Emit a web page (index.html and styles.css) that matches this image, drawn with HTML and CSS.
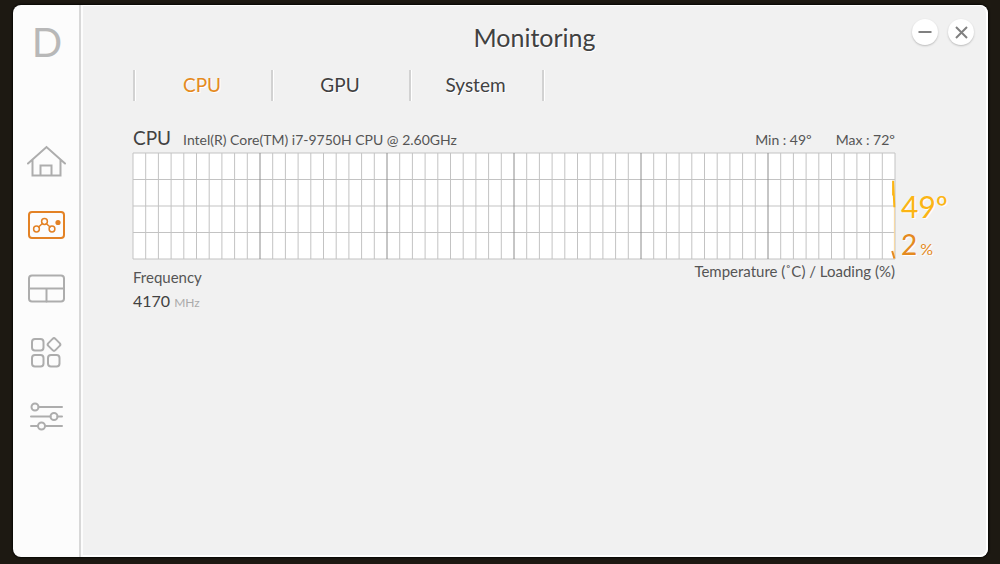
FILE: index.html
```html
<!DOCTYPE html>
<html lang="en">
<head>
<meta charset="utf-8">
<title>Monitoring</title>
<link rel="stylesheet" href="styles.css">
</head>
<body>
<div class="window">
  <nav class="sidebar" aria-label="Sections">
    <div class="logo">D</div>
    <button class="nav-button" type="button" aria-label="Home">
      <svg class="icon" viewBox="0 0 40 40"><path d="M2 22.5 20.500 6 39 22.500M6.500 19v15.500h28V19M14.500 34V24.500h11V34"/></svg>
    </button>
    <button class="nav-button active" type="button" aria-label="Monitoring" aria-current="page">
      <svg class="icon" viewBox="0 0 40 40"><rect x="3" y="7" width="35" height="26" rx="3"/><g class="fine"><circle cx="10.500" cy="24" r="2.900"/><circle cx="18.500" cy="16.500" r="2.900"/><circle cx="26" cy="24" r="2.900"/><path d="m12.600 22 3.800-3.500M20.400 18.700l3.700 3.300"/></g><circle class="dot" cx="32" cy="17.500" r="2.600"/></svg>
    </button>
    <button class="nav-button" type="button" aria-label="Layout">
      <svg class="icon" viewBox="0 0 40 40"><rect x="3" y="6.500" width="35" height="26" rx="3"/><path d="M3 19.500h35M20.500 19.500v13"/></svg>
    </button>
    <button class="nav-button" type="button" aria-label="Apps">
      <svg class="icon" viewBox="0 0 40 40"><rect x="6" y="6" width="11.500" height="11.500" rx="3"/><rect x="6" y="22" width="11.500" height="11.500" rx="3"/><rect x="22" y="22" width="11.500" height="11.500" rx="3"/><rect x="23" y="6.500" width="10" height="10" rx="2" transform="rotate(45 28 11.500)"/></svg>
    </button>
    <button class="nav-button" type="button" aria-label="Settings">
      <svg class="icon" viewBox="0 0 40 40"><path d="M12.500 10H36M5 19.500h19.500M31.500 19.500H36M5 29h7M19 29h17"/><circle cx="9" cy="10" r="3.500"/><circle cx="28" cy="19.500" r="3.500"/><circle cx="15.500" cy="29" r="3.500"/></svg>
    </button>
  </nav>
  <main class="main">
    <header class="titlebar">
      <h1 class="title">Monitoring</h1>
      <div class="controls">
        <button class="control" type="button" aria-label="Minimize"><svg viewBox="0 0 26 26"><path d="M6.500 13h13"/></svg></button>
        <button class="control" type="button" aria-label="Close"><svg viewBox="0 0 26 26"><path d="m8 8 11 11M19 8 8 19"/></svg></button>
      </div>
    </header>
    <div class="tabs" role="tablist">
      <button class="tab selected" type="button" role="tab" aria-selected="true">CPU</button>
      <button class="tab" type="button" role="tab" aria-selected="false">GPU</button>
      <button class="tab last" type="button" role="tab" aria-selected="false">System</button>
    </div>
    <section class="monitor">
      <div class="summary">
        <h2 class="device">CPU</h2>
        <span class="model">Intel(R) Core(TM) i7-9750H CPU @ 2.60GHz</span>
        <div class="ranges">
          <span>Min : 49º</span>
          <span>Max : 72º</span>
        </div>
      </div>
      <svg class="chart" viewBox="0 0 60 4" preserveAspectRatio="none" role="img" aria-label="Temperature and loading history">
        <path class="minor" d="M0 0v4m1-4v4m1-4v4m1-4v4m1-4v4m1-4v4m1-4v4m1-4v4m1-4v4m1-4v4m2-4v4m1-4v4m1-4v4m1-4v4m1-4v4m1-4v4m1-4v4m1-4v4m1-4v4m2-4v4m1-4v4m1-4v4m1-4v4m1-4v4m1-4v4m1-4v4m1-4v4m1-4v4m2-4v4m1-4v4m1-4v4m1-4v4m1-4v4m1-4v4m1-4v4m1-4v4m1-4v4m2-4v4m1-4v4m1-4v4m1-4v4m1-4v4m1-4v4m1-4v4m1-4v4m1-4v4m2-4v4m1-4v4m1-4v4m1-4v4m1-4v4m1-4v4m1-4v4m1-4v4m1-4v4m1-4v4M0 0h60M0 1h60M0 2h60M0 3h60M0 4h60"/>
        <path class="major" d="M10 0v4m10-4v4m10-4v4m10-4v4m10-4v4"/>
        <path class="trace" d="M59.950 2v2"/>
        <path class="temperature" d="M59.850 1.600V1.050L59.950 2.050"/>
        <path class="loading" d="m59.780 3.700.17.280"/>
      </svg>
      <div class="readings">
        <div class="reading temp">49º</div>
        <div class="reading load">2<span class="percent">%</span></div>
      </div>
      <div class="details">
        <div class="frequency">
          <div class="label">Frequency</div>
          <div class="value">4170<span class="unit">MHz</span></div>
        </div>
        <div class="caption">Temperature (˚C) / Loading (%)</div>
      </div>
    </section>
  </main>
</div>
</body>
</html>
```
FILE: styles.css
```css
* { box-sizing: border-box; }
body {
  margin: 0;
  min-height: 100vh;
  padding: 5px 12px 7px 13px;
  display: flex;
  background: #1d1912;
  color: #414141;
  font-family: Lato, sans-serif;
  font-size: 14px;
}
button { margin: 0; padding: 0; border: 0; background: none; color: inherit; font: inherit; }
.window {
  flex: 1;
  display: flex;
  border-radius: 8px;
  overflow: hidden;
  background: #fcfcfc;
  box-shadow: 0 0 2px 1px #080704;
}
.sidebar {
  flex: 0 0 68px;
  display: flex;
  flex-direction: column;
  align-items: stretch;
  border-right: 2px solid #d8d8d8;
}
.logo {
  height: 124px;
  padding: 14px 0 0 2px;
  color: #b8b8b8;
  font-size: 40px;
  line-height: 46px;
  text-align: center;
}
.nav-button {
  height: 64px;
  display: flex;
  align-items: center;
  justify-content: center;
  color: #adadad;
}
.nav-button.active { color: #e38225; }
.icon {
  width: 40px;
  height: 40px;
  fill: none;
  stroke: currentColor;
  stroke-width: 2;
  stroke-linecap: round;
}
.fine { stroke-width: 1.500; }
.dot { fill: currentColor; stroke: none; }
.main {
  flex: 1;
  min-width: 0;
  padding: 12px 0 24px;
  margin-left: 2px;
  background: #f1f1f1;
  border: solid #fff;
  border-width: 1px 2px 2px 0;
  border-radius: 0 8px 8px 0;
}
.titlebar {
  display: grid;
  grid-template-columns: 1fr auto 1fr;
  align-items: start;
}
.title {
  grid-column: 2;
  margin: 3px 0 0;
  font-size: 25px;
  line-height: 32px;
  font-weight: 400;
  text-shadow: 1px 1px 0 #fff;
}
.controls {
  display: flex;
  justify-content: flex-end;
  gap: 10px;
  padding: 1px 12px 0 0;
}
.control {
  width: 26px;
  height: 26px;
  border-radius: 50%;
  background: #fff;
  box-shadow: 0 1px 2px #bbb;
}
.control svg { display: block; fill: none; stroke: #808080; stroke-width: 2; }
.tabs { display: flex; margin: 17px 0 0 50px; }
.tab {
  width: 138px;
  height: 31px;
  padding: 0 2px 3px 0;
  border-left: 2px solid #d2d2d2;
  box-shadow: inset 1px 0 #fff;
  font-size: 19px;
  text-shadow: 1px 1px 0 #fff;
}
.tab.last {
  width: 135px;
  border-right: 2px solid #d2d2d2;
  box-shadow: inset 1px 0 #fff, 1px 0 #fff;
}
.selected { color: #e58a20; }
.monitor {
  display: grid;
  grid-template-columns: 1fr 85px;
  column-gap: 6px;
  margin: 24px 0 0 50px;
}
.summary {
  grid-area: 1 / 1;
  display: flex;
  align-items: baseline;
  height: 28px;
  line-height: 26px;
}
.device { margin: 0 12px 0 0; font-size: 19px; font-weight: 400; }
.model { flex: 1; color: #555; }
.ranges { display: flex; align-self: flex-end; gap: 24px; color: #555; }
.chart {
  grid-area: 2 / 1;
  display: block;
  width: 100%;
  height: 106px;
  background: #fff;
  overflow: visible;
}
.chart path { fill: none; vector-effect: non-scaling-stroke; }
.minor { stroke: #c3c3c3; stroke-width: 1; }
.major { stroke: #8c8c8c; stroke-width: 1; }
.trace { stroke: #fbd89c; stroke-width: 1; }
.temperature { stroke: #fcb514; stroke-width: 2; }
.loading { stroke: #e58a20; stroke-width: 2; }
.readings {
  grid-area: 2 / 2 / 4 / 3;
  padding-top: 34px;
  font-size: 30px;
  line-height: 38px;
}
.reading { text-shadow: 1px 1px 0 #fff; }
.temp { color: #fcb514; }
.load { color: #e58a20; font-size: 28px; }
.percent { margin-left: 3px; font-size: 16px; line-height: 1; }
.details {
  grid-area: 3 / 1;
  display: flex;
  justify-content: space-between;
  line-height: 24px;
}
.label { padding-top: 6px; color: #555; font-size: 15px; }
.value { font-size: 16px; }
.unit { margin-left: 4px; color: #aaa; font-size: 12px; }
.caption { color: #555; font-size: 15px; }
```
